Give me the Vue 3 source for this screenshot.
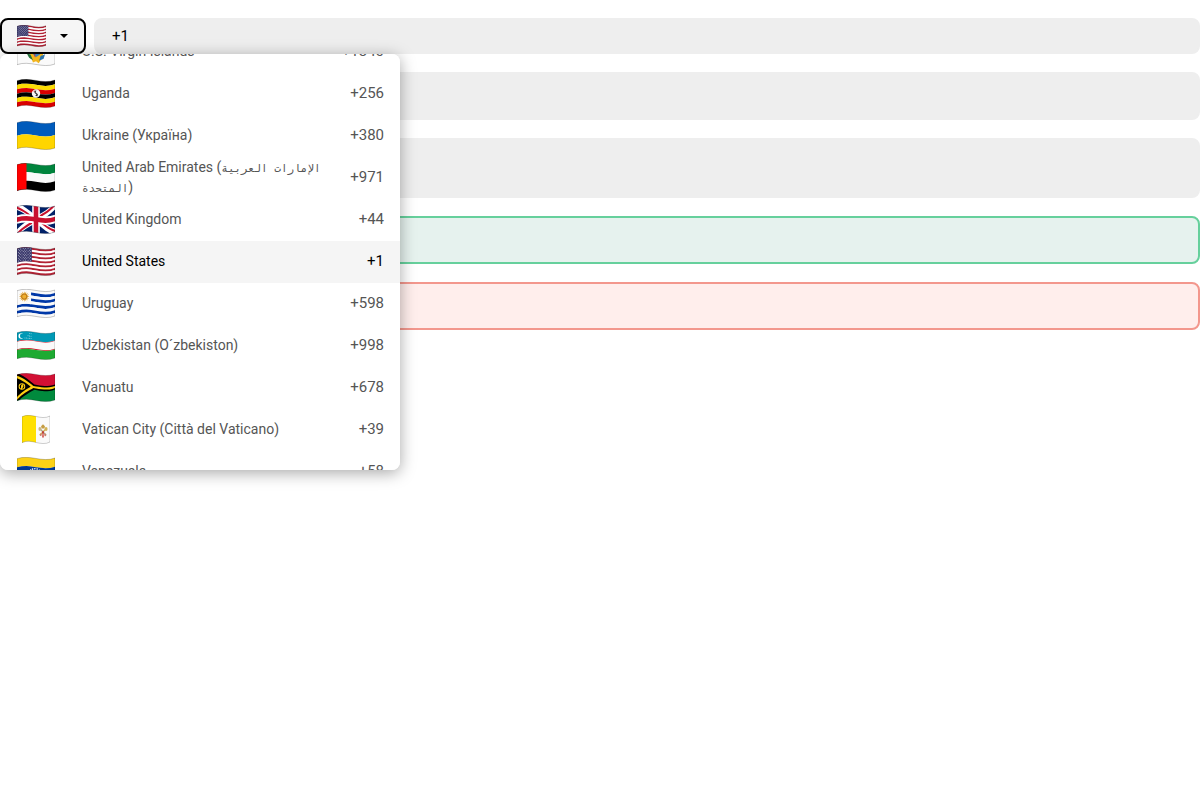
<script setup>
import { onMounted, ref } from 'vue'

const W = 38
const H = 26

function wave(u) {
  const r = 1 - u
  return 1.7 * r ** 3 - 9 * r * r * u + 18 * r * u * u + u ** 3
}

function point(u, v) {
  return `${(u * W).toFixed(2)} ${(wave(u) + v * H).toFixed(2)}`
}

// Polygon in flag coordinates (0..1), bent along the cloth's wave
function poly(fill, pts) {
  const out = []
  pts.forEach(([u1, v1], i) => {
    const [u2, v2] = pts[(i + 1) % pts.length]
    for (let k = 0; k < 8; k++) {
      out.push(point(u1 + ((u2 - u1) * k) / 8, v1 + ((v2 - v1) * k) / 8))
    }
  })
  return { fill, d: 'M' + out.join('L') + 'Z' }
}

function rect(fill, u1, v1, u2, v2) {
  return poly(fill, [[u1, v1], [u2, v1], [u2, v2], [u1, v2]])
}

function stripes(colors) {
  return colors.map((c, i) => rect(c, 0, i / colors.length, 1, (i + 1) / colors.length))
}

function disc(fill, u, v, r) {
  const x = u * W
  const y = wave(u) + v * H
  return { fill, d: `M${x - r} ${y}a${r} ${r} 0 1 0 ${2 * r} 0a${r} ${r} 0 1 0 ${-2 * r} 0Z` }
}

function starRows(u0, v0, du, dv, cols, rows, r) {
  const out = []
  for (let j = 0; j < rows; j++) {
    for (let i = 0; i < cols - (j % 2); i++) {
      out.push(disc('#fff', u0 + (i + (j % 2) / 2) * du, v0 + j * dv, r))
    }
  }
  return out
}

function sun(u, v) {
  const x = u * W
  const y = wave(u) + v * H
  let d = ''
  for (let i = 0; i < 32; i++) {
    const a = (i * Math.PI) / 16
    const r = i % 2 ? 2.8 : 5.4
    d += `${i ? 'L' : 'M'}${(x + r * Math.cos(a)).toFixed(2)} ${(y + r * Math.sin(a)).toFixed(2)}`
  }
  return [{ fill: '#d99210', d: d + 'Z' }, disc('#b8761c', u, v, 2.8), disc('#efb02f', u, v, 2.1)]
}

const red = '#b22234'
const flags = {
  vi: [
    rect('#fafafa', 0, 0, 1, 1),
    poly('#f2b51d', [[0.3, 0.3], [0.7, 0.3], [0.68, 0.66], [0.57, 0.94], [0.5, 0.88], [0.42, 0.94], [0.34, 0.66]]),
    poly('#3f83bd', [[0.38, 0.4], [0.62, 0.4], [0.6, 0.6], [0.5, 0.72], [0.4, 0.6]]),
    poly('#c5283d', [[0.45, 0.58], [0.48, 0.58], [0.48, 0.74], [0.46, 0.7]]),
    poly('#24723b', [[0.24, 0.58], [0.36, 0.66], [0.42, 0.86], [0.32, 0.78]]),
    poly('#2d72aa', [[0.74, 0.56], [0.62, 0.65], [0.58, 0.84], [0.7, 0.74]])
  ],
  ug: [
    ...stripes(['#000', '#fcdc04', '#d90000', '#000', '#fcdc04', '#d90000']),
    disc('#f5f5f5', 0.5, 0.5, 4.2),
    poly('#333', [[0.46, 0.41], [0.51, 0.38], [0.49, 0.46], [0.55, 0.52], [0.54, 0.6], [0.48, 0.6], [0.51, 0.54], [0.46, 0.48]]),
    poly('#d90000', [[0.43, 0.42], [0.46, 0.4], [0.46, 0.46]])
  ],
  ua: stripes(['#005bbb', '#ffd500']),
  ae: [...stripes(['#00843d', '#fafafa', '#000']), rect('#ff0000', 0, 0, 0.25, 1)],
  gb: [
    rect('#012169', 0, 0, 1, 1),
    poly('#fff', [[0, 0], [0.14, 0], [1, 0.87], [1, 1], [0.86, 1], [0, 0.13]]),
    poly('#fff', [[1, 0], [1, 0.13], [0.14, 1], [0, 1], [0, 0.87], [0.86, 0]]),
    poly('#c8102e', [[0, 0], [0.5, 0.5], [0.42, 0.5], [0, 0.09]]),
    poly('#c8102e', [[1, 1], [0.5, 0.5], [0.58, 0.5], [1, 0.91]]),
    poly('#c8102e', [[1, 0], [0.5, 0.5], [0.43, 0.48], [0.9, 0]]),
    poly('#c8102e', [[0, 1], [0.5, 0.5], [0.57, 0.52], [0.1, 1]]),
    rect('#fff', 0.4, 0, 0.6, 1),
    rect('#fff', 0, 0.34, 1, 0.66),
    rect('#c8102e', 0.44, 0, 0.56, 1),
    rect('#c8102e', 0, 0.41, 1, 0.59)
  ],
  us: [
    ...stripes([red, '#fff', red, '#fff', red, '#fff', red, '#fff', red, '#fff', red, '#fff', red]),
    rect('#3c3b6e', 0, 0, 0.39, 0.54),
    ...starRows(0.035, 0.05, 0.064, 0.055, 6, 9, 0.42)
  ],
  uy: [
    ...stripes(['#fafafa', '#0038a8', '#fafafa', '#0038a8', '#fafafa', '#0038a8', '#fafafa', '#0038a8', '#fafafa']),
    rect('#fafafa', 0, 0, 0.37, 0.555),
    ...sun(0.19, 0.28)
  ],
  uz: [
    rect('#0099b5', 0, 0, 1, 0.33),
    rect('#ce1126', 0, 0.33, 1, 0.36),
    rect('#fafafa', 0, 0.35, 1, 0.65),
    rect('#ce1126', 0, 0.64, 1, 0.67),
    rect('#1eaa32', 0, 0.67, 1, 1),
    disc('#fff', 0.11, 0.17, 2.7),
    disc('#0099b5', 0.14, 0.17, 2.4),
    ...[[0.33, 0.08], [0.37, 0.08], [0.29, 0.17], [0.33, 0.17], [0.37, 0.17], [0.21, 0.26], [0.25, 0.26], [0.29, 0.26], [0.33, 0.26], [0.37, 0.26]].map(
      ([u, v]) => disc('#e5f8fb', u, v, 0.45)
    )
  ],
  vu: [
    ...stripes(['#d21034', '#008a3d']),
    poly('#000', [[0, 0], [0.06, 0], [0.46, 0.4], [1, 0.4], [1, 0.6], [0.46, 0.6], [0.06, 1], [0, 1]]),
    poly('#fdce12', [[0, 0.04], [0.43, 0.46], [1, 0.46], [1, 0.54], [0.43, 0.54], [0, 0.96], [0, 0.86], [0.36, 0.5], [0, 0.14]]),
    disc('#fdce12', 0.13, 0.5, 3.3),
    disc('#000', 0.13, 0.5, 2.3),
    poly('#fdce12', [[0.1, 0.6], [0.11, 0.45], [0.16, 0.4], [0.17, 0.5], [0.13, 0.6]])
  ],
  va: [
    rect('#fafafa', 0, 0, 1, 1),
    rect('#ffe000', 0, 0, 0.5, 1),
    poly('#a9a38b', [[0.6, 0.42], [0.65, 0.4], [0.88, 0.67], [0.85, 0.71]]),
    poly('#cfad4f', [[0.9, 0.42], [0.85, 0.4], [0.62, 0.67], [0.65, 0.71]]),
    disc('#c9b684', 0.64, 0.45, 2),
    disc('#d1b255', 0.86, 0.45, 2),
    poly('#c59c42', [[0.7, 0.42], [0.68, 0.34], [0.75, 0.26], [0.82, 0.34], [0.8, 0.42]]),
    disc('#bd3b38', 0.75, 0.57, 1.3),
    disc('#c98169', 0.67, 0.67, 1.3),
    disc('#c98169', 0.83, 0.67, 1.3),
    poly('#cf4744', [[0.73, 0.6], [0.77, 0.6], [0.78, 0.77], [0.72, 0.77]])
  ],
  ve: [
    ...stripes(['#fcd116', '#003893', '#cf142b']),
    ...[[0.33, 0.56], [0.36, 0.48], [0.41, 0.43], [0.47, 0.4], [0.53, 0.4], [0.59, 0.43], [0.64, 0.48], [0.67, 0.56]].map(
      ([u, v]) => disc('#fff', u, v, 0.8)
    )
  ]
}

const outline = rect('none', 0, 0, 1, 1).d

const countries = [
  { iso: 'vi', name: 'U.S. Virgin Islands', code: '+1340' },
  { iso: 'ug', name: 'Uganda', code: '+256' },
  { iso: 'ua', name: 'Ukraine (Україна)', code: '+380' },
  { iso: 'ae', name: 'United Arab Emirates (', native: 'الإمارات العربية المتحدة', code: '+971' },
  { iso: 'gb', name: 'United Kingdom', code: '+44' },
  { iso: 'us', name: 'United States', code: '+1' },
  { iso: 'uy', name: 'Uruguay', code: '+598' },
  { iso: 'uz', name: 'Uzbekistan (O´zbekiston)', code: '+998' },
  { iso: 'vu', name: 'Vanuatu', code: '+678' },
  { iso: 'va', name: 'Vatican City (Città del Vaticano)', code: '+39' },
  { iso: 've', name: 'Venezuela', code: '+58' }
]

const selected = ref('us')
const phone = ref('+1')
const list = ref(null)

onMounted(() => {
  list.value.scrollTop = 23
})
</script>

<template>
  <main class="page">
    <div class="row">
      <div class="picker">
        <button class="trigger" type="button" aria-label="Country" aria-haspopup="listbox" aria-expanded="true">
          <svg class="flag small" viewBox="0 0 38 29" preserveAspectRatio="none" aria-hidden="true">
            <path v-for="(s, i) in flags[selected]" :key="i" :d="s.d" :fill="s.fill" />
            <path class="edge" :d="outline" />
          </svg>
          <svg class="caret" viewBox="0 0 8 4" aria-hidden="true"><path d="M0 0h8L4 4z" /></svg>
        </button>
        <ul ref="list" class="menu" role="listbox" aria-label="Country">
          <li
            v-for="c in countries"
            :key="c.iso"
            class="option"
            :class="{ active: c.iso === selected }"
            role="option"
            :aria-selected="c.iso === selected"
            @click="selected = c.iso"
          >
            <span class="flag-box">
              <svg class="flag" :class="{ square: c.iso === 'va' }" viewBox="0 0 38 29" preserveAspectRatio="none" aria-hidden="true">
                <path v-for="(s, i) in flags[c.iso]" :key="i" :d="s.d" :fill="s.fill" />
                <path class="edge" :d="outline" />
              </svg>
            </span>
            <span class="name">{{ c.name }}<template v-if="c.native"><bdi class="native" lang="ar">{{ c.native }}</bdi>)</template></span>
            <span class="code">{{ c.code }}</span>
          </li>
        </ul>
      </div>
      <input v-model="phone" class="field small-field" type="tel" aria-label="Phone number" />
    </div>
    <input class="field" type="tel" aria-label="Phone number, medium" />
    <input class="field large-field" type="tel" aria-label="Phone number, large" />
    <input class="field success" type="tel" aria-label="Phone number, valid" />
    <input class="field error" type="tel" aria-label="Phone number, invalid" />
  </main>
</template>

<style>
body {
  background: #fff;
}
</style>

<style scoped>
.page {
  display: flex;
  flex-direction: column;
  gap: 18px;
  box-sizing: border-box;
  min-height: 100vh;
  padding-top: 18px;
  font-family: Roboto, "Liberation Sans", sans-serif;
  font-size: 14px;
  line-height: 20px;
  color: #000;
}
.row {
  display: flex;
  gap: 8px;
}
.picker {
  position: relative;
}
.trigger {
  display: flex;
  align-items: center;
  gap: 14px;
  width: 86px;
  height: 36px;
  padding: 0 15px;
  border: 2px solid #000;
  border-radius: 8px;
  background: #f6f6f6;
}
.caret {
  width: 8px;
  height: 4px;
}
.field {
  box-sizing: border-box;
  width: 100%;
  height: 48px;
  padding: 0 16px;
  border: 2px solid #eee;
  border-radius: 8px;
  background: #eee;
  font: inherit;
  font-size: 15px;
  color: #000;
  outline: none;
}
.small-field {
  flex: 1;
  min-width: 0;
  height: 36px;
}
.large-field {
  height: 60px;
}
.success {
  border-color: #66d09c;
  background: #e6f2ee;
}
.error {
  border-color: #f3978d;
  background: #ffeeec;
}
.menu {
  position: absolute;
  z-index: 1;
  top: 100%;
  left: 0;
  box-sizing: border-box;
  width: 400px;
  height: 416px;
  margin: 0;
  padding: 0;
  overflow-y: auto;
  scrollbar-width: none;
  list-style: none;
  border-radius: 8px;
  background: #fff;
  box-shadow: 0 3px 16px rgba(0, 0, 0, 0.35);
}
.option {
  display: flex;
  align-items: center;
  box-sizing: border-box;
  min-height: 42px;
  padding: 0 16px 2px;
  color: #555;
  cursor: pointer;
}
.option.active {
  background: #f5f5f5;
  color: #000;
}
.flag-box {
  display: flex;
  justify-content: center;
  width: 40px;
  margin-right: 26px;
}
.flag {
  width: 38px;
  height: 29px;
}
.flag.square {
  width: 28px;
}
.flag.small {
  width: 29px;
  height: 22px;
}
.edge {
  fill: none;
  stroke: #000;
  stroke-opacity: 0.22;
  stroke-width: 1;
}
.name {
  flex: 1;
}
.native {
  font-family: "DejaVu Sans Mono", monospace;
  font-size: 11px;
  line-height: 12px;
}
.code {
  margin-left: 16px;
  font-size: 15px;
}
</style>
